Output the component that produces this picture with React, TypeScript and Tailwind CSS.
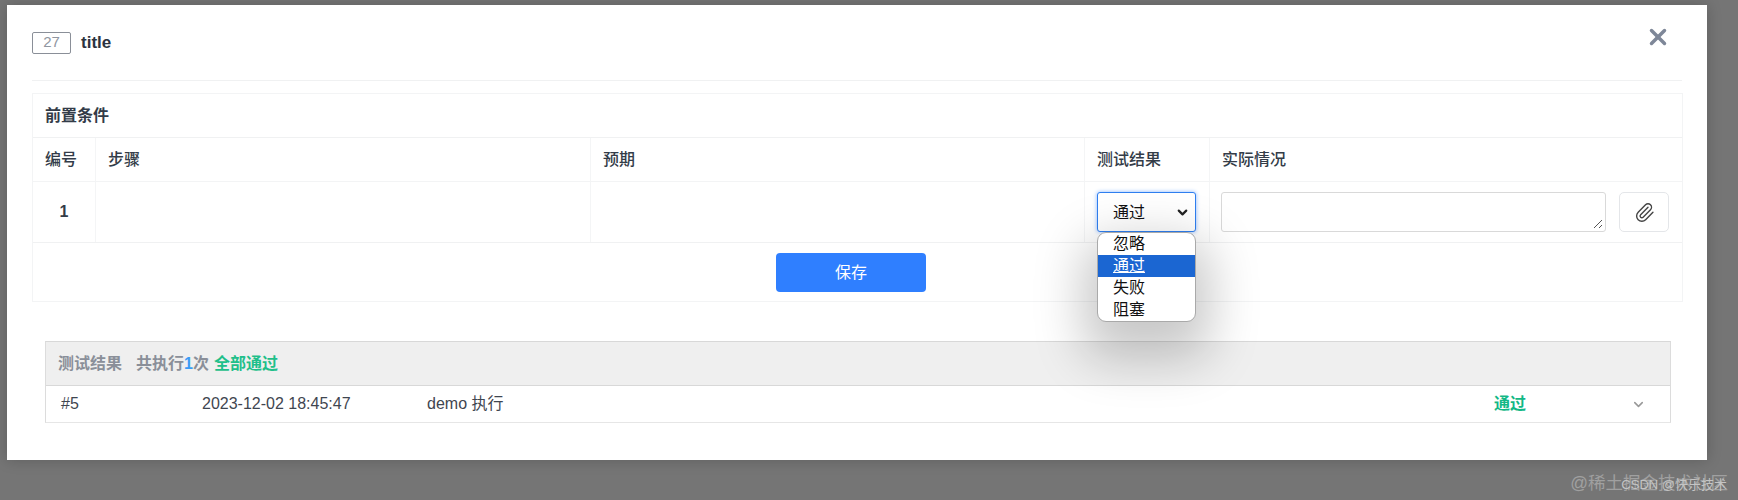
import { X, Paperclip, ChevronDown } from "lucide-react";

const font = { fontFamily: '"Liberation Sans", "Noto Sans CJK SC", sans-serif' };

const options = ["忽略", "通过", "失败", "阻塞"];

function Cell({ className, children }: { className: string; children?: React.ReactNode }) {
    return (
        <div className={`flex h-full shrink-0 items-center border-r border-[#f4f5f6] px-3 text-base text-[#333c48] last:border-r-0 ${className}`}>
            {children}
        </div>
    );
}

function ResultSelect() {
    return (
        <div className="relative">
            <div className="flex h-10 w-[99px] items-center justify-between rounded-[3px] border border-[#2f7ff0] bg-white pr-[5px] pl-[15px] text-base text-[#111] shadow-[0_0_4px_#8ab8ff]">
                <span className="pt-[2px]">通过</span>
                <ChevronDown size={15} strokeWidth={3.5} className="text-[#222]" />
            </div>
            <div className="absolute top-[40px] left-0 z-10 w-[99px] overflow-hidden rounded-[9px] border border-[#a9a9a9] bg-white text-base leading-[22px] text-[#111] shadow-[0_22px_50px_14px_rgba(0,0,0,0.22)]">
                {options.map((o) => (
                    <div key={o} className={o === "通过" ? "h-[22px] bg-[#1b66d2] pl-[15px] text-white underline" : "h-[22px] pl-[15px]"}>
                        {o}
                    </div>
                ))}
            </div>
        </div>
    );
}

export default function App() {
    return (
        <div style={font} className="relative h-[500px] w-[1738px] overflow-hidden bg-[#757575] px-[7px] pt-[5px]">
            <div className="flex h-[455px] w-[1700px] flex-col bg-white px-[25px] shadow-[0_0_14px_rgba(0,0,0,0.2)]">
                <div className="flex h-[76px] shrink-0 items-center border-b border-[#f0f1f2]">
                    <span className="flex h-[22px] w-[39px] items-center justify-center rounded-[2px] border border-[#8a8f98] text-[15px] text-[#9096a0]">27</span>
                    <span className="ml-[10px] text-[17px] font-bold text-[#2b3340]">title</span>
                    <X size={26} strokeWidth={3.2} className="relative -top-[6px] ml-auto mr-[11px] text-[#7e8798]" />
                </div>

                <div className="mt-3 h-[209px] w-[1651px] border border-[#f3f4f5]">
                    <div className="flex h-[44px] items-center border-b border-[#f0f1f2] pl-3 text-base font-bold text-[#333c48]">前置条件</div>
                    <div className="flex h-[44px] items-center border-b border-[#f3f4f5] font-medium">
                        <Cell className="w-[63px]">编号</Cell>
                        <Cell className="w-[495px]">步骤</Cell>
                        <Cell className="w-[494px]">预期</Cell>
                        <Cell className="w-[125px]">测试结果</Cell>
                        <Cell className="flex-1">实际情况</Cell>
                    </div>
                    <div className="flex h-[61px] items-center border-b border-[#f0f1f2]">
                        <Cell className="w-[63px] justify-center font-bold">1</Cell>
                        <Cell className="w-[495px]" />
                        <Cell className="w-[494px]" />
                        <Cell className="w-[125px] items-start pt-[10px]"><ResultSelect /></Cell>
                        <div className="flex h-full flex-1 items-start gap-[13px] pt-[10px] pl-[11px]">
                            <div className="relative h-10 w-[385px] rounded-[3px] border border-[#d9d9d9]">
                                <svg className="absolute right-0.5 bottom-0.5" width="10" height="10" viewBox="0 0 10 10" stroke="#555" strokeWidth="1">
                                    <path d="M9 1 1 9M9 6 6 9" />
                                </svg>
                            </div>
                            <div className="flex h-10 w-[50px] items-center justify-center rounded-[5px] border border-[#e4e6e9]">
                                <Paperclip size={21} strokeWidth={1.6} className="text-[#444]" />
                            </div>
                        </div>
                    </div>
                    <div className="flex h-[58px] items-start justify-center pt-[10px] pr-[13px]">
                        <button className="h-[39px] w-[150px] rounded-[4px] bg-[#2f7fff] text-base text-white">保存</button>
                    </div>
                </div>

                <div className="mt-[39px] ml-[13px] w-[1626px] border border-t-[#d8d8d8] border-r-[#dcdcdc] border-b-[#e6e6e6] border-l-[#dcdcdc] text-base">
                    <div className="flex h-[44px] items-center border-b border-[#d8d8d8] bg-[#efefef] pt-[1px] pl-3 font-bold text-[#8a8f99]">
                        <span>测试结果</span>
                        <span className="ml-[14px]">共执行</span>
                        <span className="text-[#3b9bf5]">1</span>
                        <span>次</span>
                        <span className="ml-[5px] text-[#1fbf8a]">全部通过</span>
                    </div>
                    <div className="flex h-9 items-center text-[#3f4650]">
                        <span className="ml-[15px] w-[141px]">#5</span>
                        <span className="w-[225px]">2023-12-02 18:45:47</span>
                        <span>demo 执行</span>
                        <span className="ml-auto mr-[105px] font-bold text-[#13b886]">通过</span>
                        <ChevronDown size={15} strokeWidth={2.5} className="mr-6 text-[#999]" />
                    </div>
                </div>
            </div>
            <span className="absolute right-[10px] bottom-[4px] text-[17.5px] text-[#a0a0a0]">@稀土掘金技术社区</span>
            <span className="absolute right-[11px] bottom-[6px] text-[13px] text-[#c4c4c4]">CSDN @快乐技术</span>
        </div>
    );
}
